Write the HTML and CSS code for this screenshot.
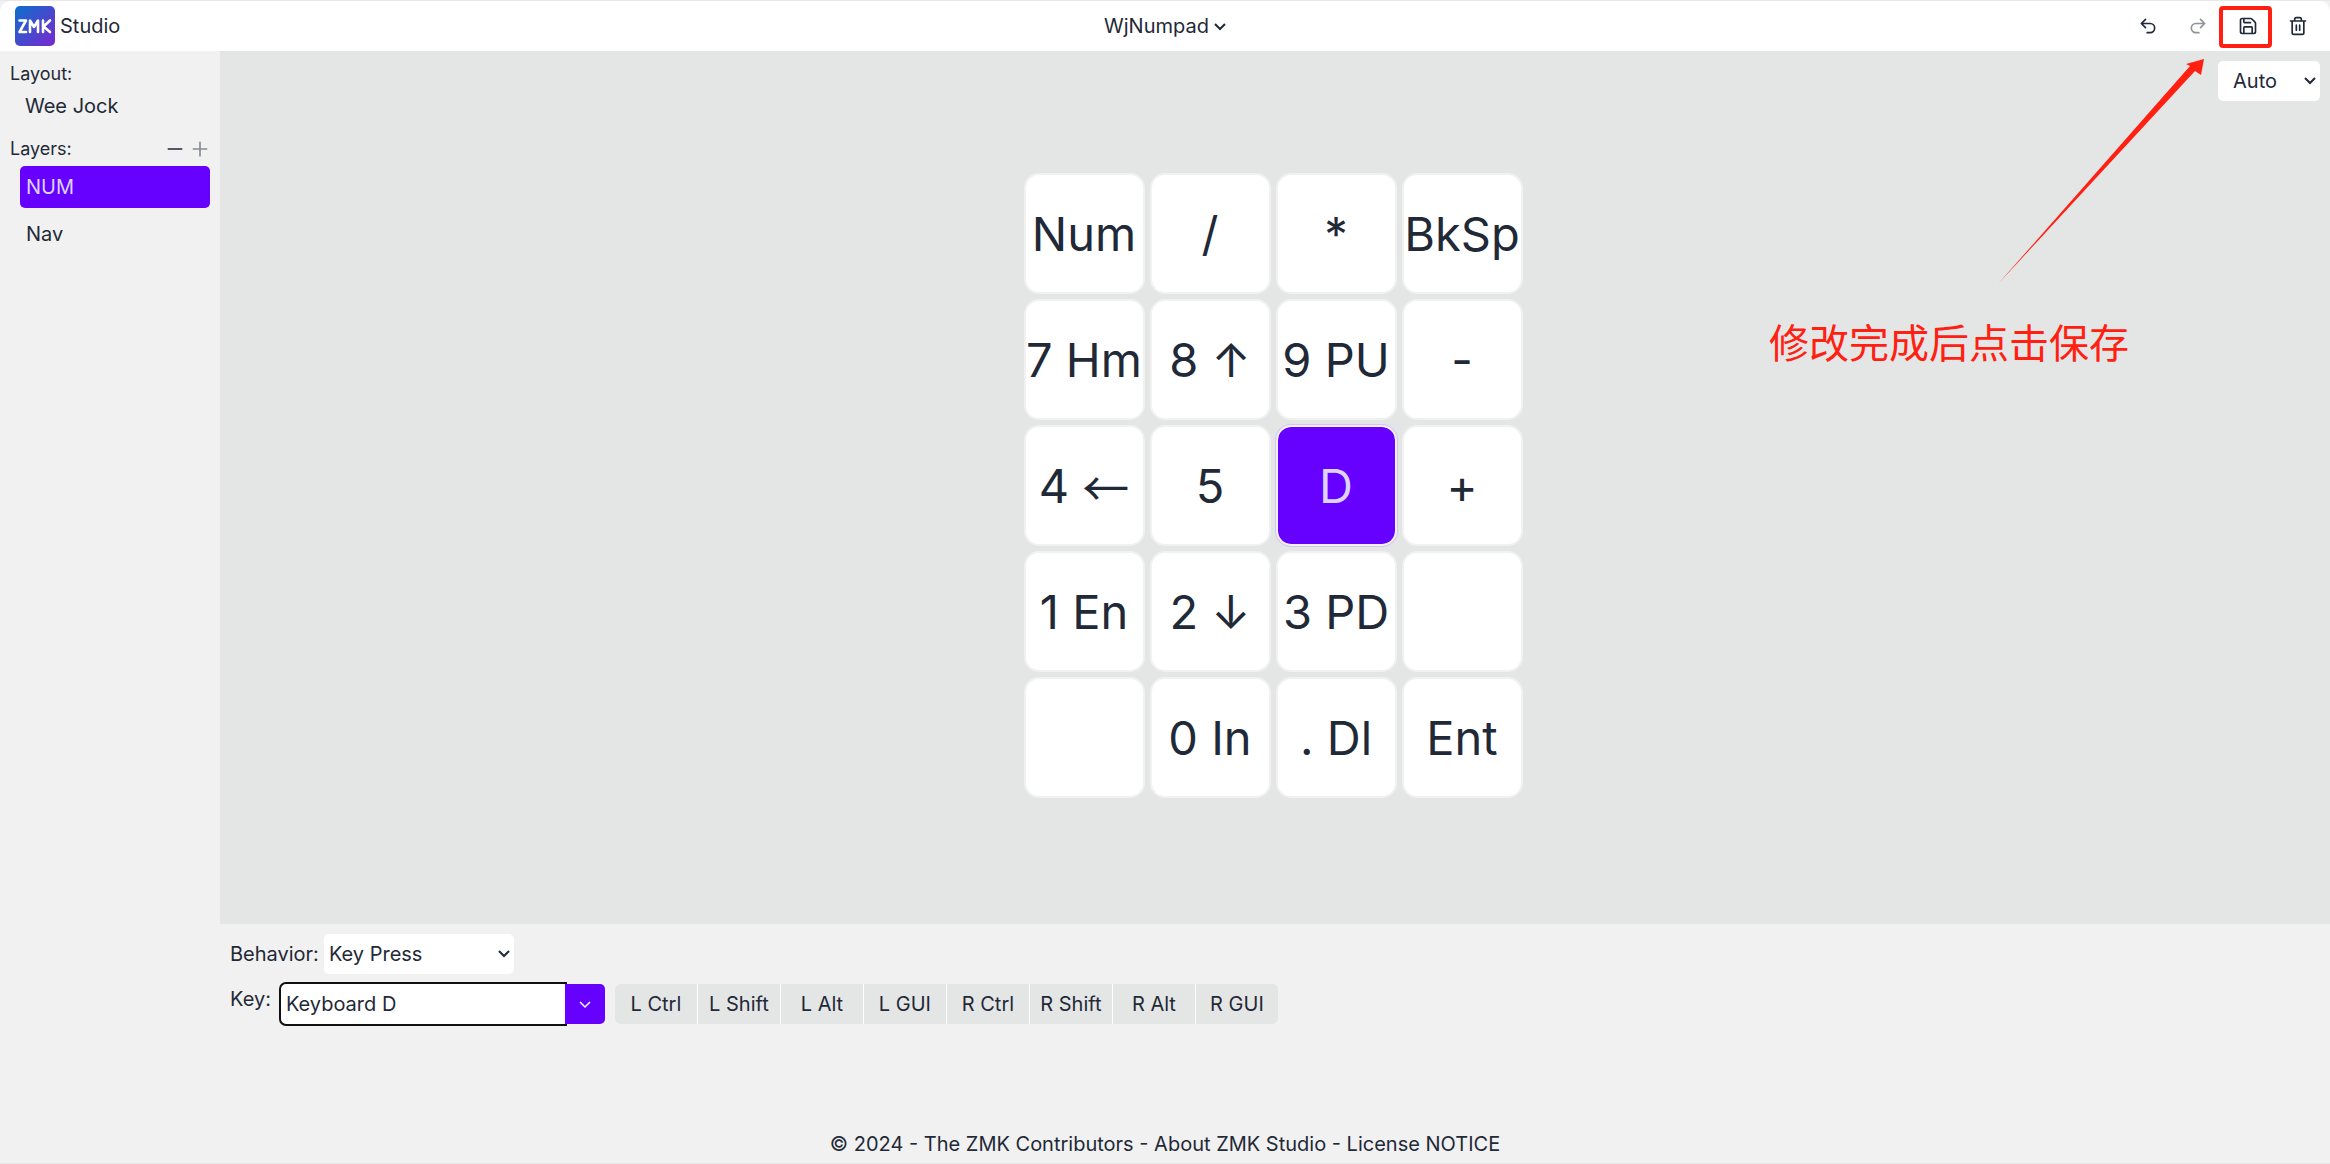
FILE: index.html
```html
<!DOCTYPE html>
<html lang="en">
<head>
<meta charset="utf-8">
<title>ZMK Studio</title>
<link rel="stylesheet" href="styles.css">
</head>
<body>
<div class="app">
  <header class="topbar">
    <div class="brand">
      <svg class="logo" viewBox="0 0 40 40" aria-label="ZMK">
        <defs><linearGradient id="logo-fill" x1="0" y1="0" x2="1" y2="1"><stop offset="0" stop-color="#0b6fcb"/><stop offset="1" stop-color="#7a28cf"/></linearGradient></defs>
        <rect width="40" height="40" rx="5" fill="url(#logo-fill)"/>
        <g fill="none" stroke="#fff" stroke-width="2.6" stroke-linecap="round" stroke-linejoin="round"><path d="M4.500 14.500h6.500l-6.500 11.500h6.500M15 26V14.500l4 6.500 4-6.500V26M28 14.500V26M35 14.500l-6.500 6 6.500 5.500"/></g>
      </svg>
      <span>Studio</span>
    </div>
    <button class="device" type="button">WjNumpad
      <svg class="chevron" viewBox="0 0 12 12"><path d="M1 4l5 5 5-5"/></svg>
    </button>
    <div class="tools">
      <button class="tool" type="button" aria-label="Undo"><svg class="icon" viewBox="0 0 24 24"><path d="M9 14 4 9l5-5M4 9h10.500a5.500 5.500 0 0 1 0 11H11"/></svg></button>
      <button class="tool" type="button" aria-label="Redo" disabled><svg class="icon" viewBox="0 0 24 24"><path d="m15 14 5-5-5-5M20 9H9.500a5.500 5.500 0 0 0 0 11H13"/></svg></button>
      <button class="tool" type="button" aria-label="Save"><svg class="icon" viewBox="0 0 24 24"><path d="M15.200 3a2 2 0 0 1 1.400.6l3.800 3.800a2 2 0 0 1 .6 1.400V19a2 2 0 0 1-2 2H5a2 2 0 0 1-2-2V5a2 2 0 0 1 2-2zM17 21v-7a1 1 0 0 0-1-1H8a1 1 0 0 0-1 1v7M7 3v4a1 1 0 0 0 1 1h7"/></svg>
        <svg class="callout" viewBox="0 0 210 230" aria-hidden="true"><path d="M208 2 205 18 199 14 2 227 194 9 190 7z"/></svg>
        <span class="marker"></span>
      </button>
      <button class="tool" type="button" aria-label="Discard"><svg class="icon" viewBox="0 0 24 24"><path d="M3 6h18M19 6v14a2 2 0 0 1-2 2H7a2 2 0 0 1-2-2V6M8 6V4a2 2 0 0 1 2-2h4a2 2 0 0 1 2 2v2M10 11v6M14 11v6"/></svg></button>
    </div>
  </header>
  <aside class="sidebar">
    <h2 class="label">Layout:</h2>
    <p class="layout-name">Wee Jock</p>
    <div class="layers-head">
      <h2 class="label">Layers:</h2>
      <div class="layer-tools">
        <button type="button" aria-label="Remove layer"><svg class="icon" viewBox="0 0 24 24"><path d="M4 12h16"/></svg></button>
        <button type="button" aria-label="Add layer" disabled><svg class="icon" viewBox="0 0 24 24"><path d="M4 12h16M12 4v16"/></svg></button>
      </div>
    </div>
    <ul class="layers">
      <li class="layer selected">NUM</li>
      <li class="layer">Nav</li>
    </ul>
  </aside>
  <main class="stage">
    <select class="select zoom" aria-label="Zoom"><option>Auto</option></select>
    <p class="note" lang="zh-CN">修改完成后点击保存</p>
    <div class="keys">
      <button class="key" type="button">Num</button><button class="key" type="button">/</button><button class="key" type="button">*</button><button class="key" type="button">BkSp</button>
      <button class="key" type="button">7 Hm</button><button class="key" type="button">8 ↑</button><button class="key" type="button">9 PU</button><button class="key" type="button">-</button>
      <button class="key" type="button">4 <span class="arrow">←</span></button><button class="key" type="button">5</button><button class="key active" type="button">D</button><button class="key" type="button">+</button>
      <button class="key" type="button">1 En</button><button class="key" type="button">2 ↓</button><button class="key" type="button">3 PD</button><button class="key" type="button" aria-label="Blank"></button>
      <button class="key" type="button" aria-label="Blank"></button><button class="key" type="button">0 In</button><button class="key" type="button">. Dl</button><button class="key" type="button">Ent</button>
    </div>
  </main>
  <section class="editor">
    <div class="row">
      <label for="behavior">Behavior:</label>
      <select class="select behavior" id="behavior"><option>Key Press</option></select>
    </div>
    <div class="row key-row">
      <label for="key">Key:</label>
      <div class="combo">
        <input id="key" type="text" value="Keyboard D">
        <button type="button" aria-label="Show keys"><svg class="chevron" viewBox="0 0 12 12"><path d="M1 4l5 5 5-5"/></svg></button>
      </div>
      <div class="mods">
        <button type="button">L Ctrl</button><button type="button">L Shift</button><button type="button">L Alt</button><button type="button">L GUI</button><button type="button">R Ctrl</button><button type="button">R Shift</button><button type="button">R Alt</button><button type="button">R GUI</button>
      </div>
    </div>
  </section>
  <footer class="footer">© 2024 - The ZMK Contributors - <a href="#about">About ZMK Studio</a> - <a href="#license">License NOTICE</a></footer>
</div>
</body>
</html>
```
FILE: styles.css
```css
* { box-sizing: border-box; margin: 0; padding: 0; }

body {
  background: #f1f1f1;
  color: #1f2937;
  font: 20px/30px Inter, "Noto Sans CJK SC", sans-serif;
}

button, input, select { font: inherit; color: inherit; border: 0; background: none; }
button { display: flex; align-items: center; justify-content: center; }
a { color: inherit; text-decoration: none; }

.app {
  min-height: 100vh;
  display: grid;
  grid-template-columns: 220px 1fr;
  grid-template-rows: auto 1fr 201px auto;
  border-top: 1px solid #e8e8e8;
  border-bottom: 1px solid #e8e8e8;
}

.topbar {
  grid-column: 1 / -1;
  display: grid;
  grid-template-columns: 1fr auto 1fr;
  align-items: center;
  height: 50px;
  padding: 0 7px;
  background: #fff;
  border-radius: 10px 10px 0 0;
}
.brand { display: flex; align-items: center; gap: 5px; padding-left: 8px; }
.logo { width: 40px; height: 40px; }
.device { gap: 5px; }
.chevron { width: 12px; height: 12px; fill: none; stroke: currentColor; stroke-width: 2; }
.icon { width: 20px; height: 20px; fill: none; stroke: currentColor; stroke-width: 2; stroke-linecap: round; stroke-linejoin: round; }
.tools { display: flex; justify-content: flex-end; }
.tool { position: relative; width: 50px; height: 40px; }
.tool:disabled, .layer-tools button:disabled { opacity: .5; }

.marker { position: absolute; left: -4px; top: 0; width: 53px; height: 42px; border: 4px solid #ff2012; border-radius: 4px; z-index: 2; }
.callout { position: absolute; right: 67px; top: 51px; width: 210px; height: 230px; fill: #ff2012; z-index: 2; pointer-events: none; }

.sidebar { grid-row: 2 / 4; padding: 10px; }
.label { font-size: 18px; font-weight: 400; line-height: 26px; }
.layout-name { padding: 4px 15px; }
.layers-head { display: flex; justify-content: space-between; align-items: center; margin-top: 11px; }
.layer-tools { display: flex; gap: 5px; }
.layers { list-style: none; margin: 4px 0 0 10px; display: grid; gap: 5px; }
.layer { height: 42px; padding: 6px; border-radius: 5px; }
.selected { background: #60f; color: #dcd3ff; }

.stage {
  position: relative;
  display: flex;
  align-items: center;
  justify-content: center;
  padding: 0 4px 4px 0;
  background: #e4e6e5;
}
.keys { display: grid; grid-template-columns: repeat(4, 121px); grid-auto-rows: 121px; gap: 5px; }
.key {
  border: 2px solid #f1f1f1;
  border-radius: 15px;
  background: #fff;
  font-size: 47px;
  line-height: 60px;
  white-space: pre;
}
.key.active { background: #60f; background-clip: padding-box; color: #dcd3ff; box-shadow: 0 0 0 1px #d5c5f0; }
.arrow { font-family: "Noto Sans CJK SC", sans-serif; }

.select {
  appearance: none;
  height: 40px;
  border-radius: 5px;
  background: #fff url("data:image/svg+xml,%3Csvg xmlns='http://www.w3.org/2000/svg' viewBox='0 0 12 12'%3E%3Cpath d='M1 3l5 5 5-5' fill='none' stroke='%231f2937' stroke-width='2'/%3E%3C/svg%3E") no-repeat right 4px center / 12px 12px;
}
.zoom { position: absolute; top: 10px; right: 10px; width: 102px; padding: 0 15px; }
.note { position: absolute; top: 260px; right: 201px; color: #ff2012; font: 40px/60px "Noto Sans CJK SC", sans-serif; }

.editor { grid-column: 2; padding: 10px; }
.row { display: flex; align-items: center; gap: 5px; }
.behavior { width: 190px; padding: 0 5px; }
.key-row { align-items: flex-start; margin-top: 10px; gap: 10px; }
.combo { display: flex; }
.combo input { width: 284px; height: 40px; padding: 0 5px; background: #fff; border-radius: 5px 0 0 5px; outline: 2px solid #101010; }
.combo button { position: relative; width: 40px; height: 40px; background: #60f; color: #fff; border-radius: 0 5px 5px 0; }
.combo .chevron { stroke-width: 1.5; }
.mods { display: flex; gap: 1px; background: #fff; border-radius: 5px; overflow: hidden; }
.mods button { width: 82px; height: 40px; background: #e4e6e5; }

.footer { grid-column: 1 / -1; padding: 4px; text-align: center; }
```
